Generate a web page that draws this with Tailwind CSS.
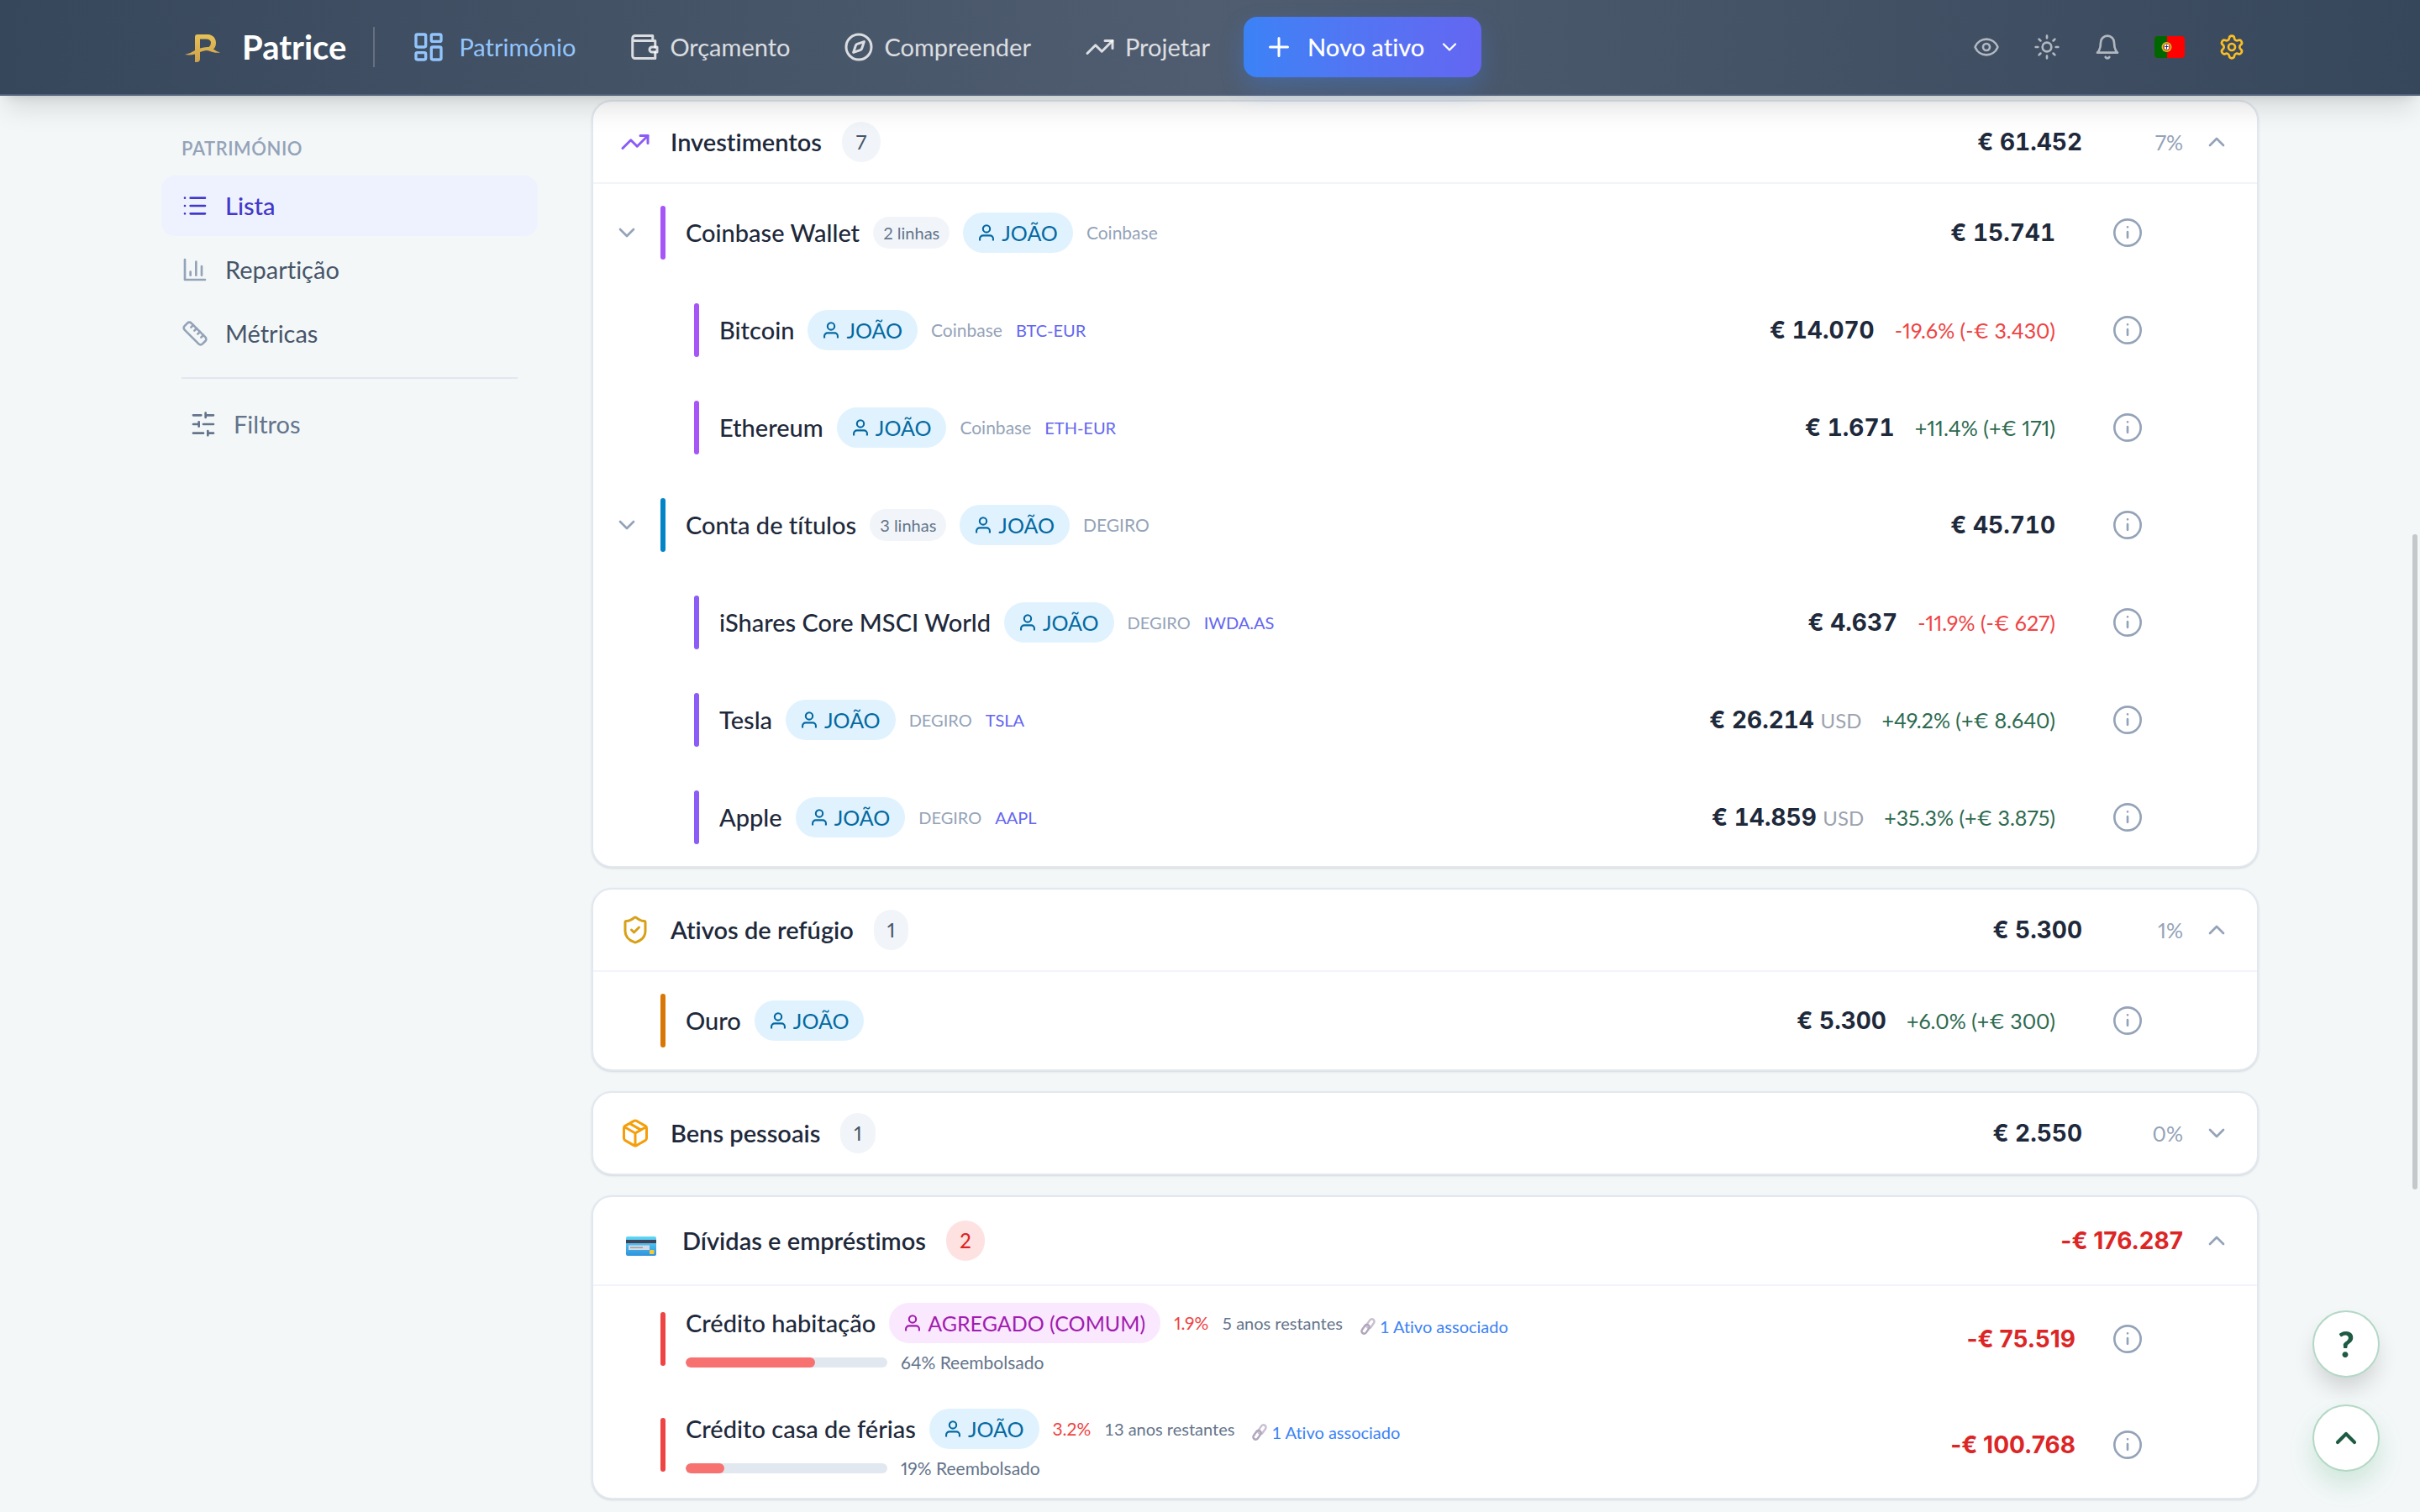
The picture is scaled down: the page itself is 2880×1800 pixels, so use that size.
<!DOCTYPE html>
<html lang="pt">
  <head>
    <meta charset="UTF-8" />
    <meta name="viewport" content="width=device-width, initial-scale=1.0" />
    <title>Patrice - Património</title>
    <script src="https://cdn.jsdelivr.net/npm/@tailwindcss/browser@4"></script>
  </head>

  <body class="min-h-screen bg-[#f3f7f8] font-[Lato,sans-serif] text-[29px] leading-10 text-[#1e293b] [font-variant-ligatures:none]">
    <!-- Icon sprite -->
    <svg class="hidden" aria-hidden="true">
      <symbol id="i-dashboard" viewBox="0 0 24 24"><rect x="3" y="3" width="7" height="9" rx="1" /><rect x="14" y="3" width="7" height="5" rx="1" /><rect x="14" y="12" width="7" height="9" rx="1" /><rect x="3" y="16" width="7" height="5" rx="1" /></symbol>
      <symbol id="i-wallet" viewBox="0 0 24 24"><path d="M18.500 7V3H4.500a2 2 0 0 0 0 4H20.500v5M2.500 5v14a2 2 0 0 0 2 2h16v-5" /><path d="M22 12h-4a2 2 0 0 0 0 4h4z" /></symbol>
      <symbol id="i-compass" viewBox="0 0 24 24"><circle cx="12" cy="12" r="10" /><path d="m16.240 7.760-1.804 5.411a2 2 0 0 1-1.265 1.265L7.760 16.240l1.804-5.411a2 2 0 0 1 1.265-1.265z" /></symbol>
      <symbol id="i-trend" viewBox="0 0 24 24"><path d="M16 7h6v6" /><path d="m22 7-8.500 8.500-5-5L2 17" /></symbol>
      <symbol id="i-plus" viewBox="0 0 24 24"><path d="M5 12h14M12 5v14" /></symbol>
      <symbol id="i-down" viewBox="0 0 24 24"><path d="m6 9 6 6 6-6" /></symbol>
      <symbol id="i-up" viewBox="0 0 24 24"><path d="m18 15-6-6-6 6" /></symbol>
      <symbol id="i-eye" viewBox="0 0 24 24"><path d="M2.062 12.348a1 1 0 0 1 0-.696 10.750 10.750 0 0 1 19.876 0 1 1 0 0 1 0 .696 10.750 10.750 0 0 1-19.876 0" /><circle cx="12" cy="12" r="3" /></symbol>
      <symbol id="i-sun" viewBox="0 0 24 24"><circle cx="12" cy="12" r="4" /><path d="M12 2v2M12 20v2M4.930 4.930l1.410 1.410M17.660 17.660l1.410 1.410M2 12h2M20 12h2M6.340 17.660l-1.410 1.410M19.070 4.930l-1.410 1.410" /></symbol>
      <symbol id="i-bell" viewBox="0 0 24 24"><path d="M6 8a6 6 0 0 1 12 0c0 7 3 9 3 9H3s3-2 3-9" /><path d="M10.300 21a1.940 1.940 0 0 0 3.400 0" /></symbol>
      <symbol id="i-gear" viewBox="0 0 24 24"><path d="M9.671 4.136a2.340 2.340 0 0 1 4.659 0 2.340 2.340 0 0 0 3.319 1.915 2.340 2.340 0 0 1 2.330 4.033 2.340 2.340 0 0 0 0 3.831 2.340 2.340 0 0 1-2.330 4.033 2.340 2.340 0 0 0-3.319 1.915 2.340 2.340 0 0 1-4.659 0 2.340 2.340 0 0 0-3.320-1.915 2.340 2.340 0 0 1-2.330-4.033 2.340 2.340 0 0 0 0-3.831A2.340 2.340 0 0 1 6.350 6.051a2.340 2.340 0 0 0 3.319-1.915" /><circle cx="12" cy="12" r="3" /></symbol>
      <symbol id="i-list" viewBox="0 0 24 24"><path d="M3 5h.01M3 12h.01M3 19h.01M8 5h13M8 12h13M8 19h13" /></symbol>
      <symbol id="i-chart" viewBox="0 0 24 24"><path d="M3 3v18h18M8 17v-3M13 17V5M18 17V9" /></symbol>
      <symbol id="i-ruler" viewBox="0 0 24 24"><path d="M21.300 15.300a2.400 2.400 0 0 1 0 3.400l-2.600 2.600a2.400 2.400 0 0 1-3.400 0L2.700 8.700a2.410 2.410 0 0 1 0-3.400l2.600-2.600a2.410 2.410 0 0 1 3.400 0Z" /><path d="m14.500 12.500 2-2M11.500 9.500l2-2M8.500 6.500l2-2M17.500 15.500l2-2" /></symbol>
      <symbol id="i-sliders" viewBox="0 0 24 24"><path d="M10 4H3M12 20H3M14 2v4M16 18v4M21 12h-9M21 20h-5M21 4h-7M8 10v4M8 12H3" /></symbol>
      <symbol id="i-user" viewBox="0 0 24 24"><circle cx="12" cy="6.500" r="5" /><path d="M2.500 23.500v-3A4.500 4.500 0 0 1 7 16h10a4.500 4.500 0 0 1 4.500 4.500v3" /></symbol>
      <symbol id="i-info" viewBox="0 0 24 24"><circle cx="12" cy="12" r="9.400" /><path d="M12 11.500v4M12 8h.01" /></symbol>
      <symbol id="i-shield" viewBox="0 0 24 24"><path d="M20 13c0 5-3.500 7.500-7.660 8.950a1 1 0 0 1-.67-.01C7.500 20.500 4 18 4 13V6a1 1 0 0 1 1-1c2 0 4.500-1.200 6.240-2.720a1.170 1.170 0 0 1 1.520 0C14.510 3.810 17 5 19 5a1 1 0 0 1 1 1z" /><path d="m9 12 2 2 4-4" /></symbol>
      <symbol id="i-box" viewBox="0 0 24 24"><path d="M11 21.730a2 2 0 0 0 2 0l7-4A2 2 0 0 0 21 16V8a2 2 0 0 0-1-1.730l-7-4a2 2 0 0 0-2 0l-7 4A2 2 0 0 0 3 8v8a2 2 0 0 0 1 1.730zM12 22V12M3.290 7 12 12l8.710-5M7.500 4.270l9 5.150" /></symbol>
      <symbol id="i-link" viewBox="0 0 24 24"><rect x="-3.500" y="-7" width="7" height="14" rx="3.500" transform="translate(15.500 8) rotate(35)" stroke="#c9c0d2" /><rect x="-3.500" y="-7" width="7" height="14" rx="3.500" transform="translate(8.500 16) rotate(35)" stroke="#b1a6bd" /></symbol>
    </svg>

    <!-- Top bar -->
    <header class="relative z-10 flex h-[114px] items-center border-b-2 border-[#52607a] bg-linear-to-r from-[#37475b] via-[#505d70] to-[#37475b] pr-[202px] pl-[212px] shadow-[0_20px_30px_-6px_rgba(0,0,0,0.12),0_8px_12px_-8px_rgba(0,0,0,0.12)]">
      <a href="#" class="flex items-center gap-6 text-[40px] font-bold text-white">
        <svg class="ml-1.5 h-9 w-[46px]" viewBox="0 0 46 36">
          <defs>
            <linearGradient id="gold" x1="0" y1="0" x2="0" y2="1">
              <stop offset="0" stop-color="#e8c158" />
              <stop offset="1" stop-color="#cfa04a" />
            </linearGradient>
          </defs>
          <path fill="url(#gold)" fill-rule="evenodd" d="M14 22V6q0-3 3-3h11c7 0 11 4 11 10 0 3-1 5.500-3 7.500q3 2.500 8 4-5 1-10-.8-3.500-1.700-6.500-1.700-3.500.3-7.500 2V32q0 4-4 4h-2v-9.500Q8 28 2 27q6.500-1.200 12-5zM20 19.500q6-2 10.500-1.500 2.500-2 2.500-5 0-4.500-6-4.500h-7z" />
        </svg>
        Patrice
      </a>
      <span class="ml-8 h-12 w-0.5 bg-white/20"></span>
      <nav class="ml-11 flex items-center gap-16 text-white/80">
        <a href="#" class="flex items-center gap-4 text-[#93c5fd]">
          <svg class="size-10 fill-none stroke-current stroke-2 [stroke-linecap:round] [stroke-linejoin:round]"><use href="#i-dashboard" /></svg>
          Património
        </a>
        <a href="#" class="flex items-center gap-3">
          <svg class="size-9 fill-none stroke-current stroke-2 [stroke-linecap:round] [stroke-linejoin:round]"><use href="#i-wallet" /></svg>
          Orçamento
        </a>
        <a href="#" class="flex items-center gap-3">
          <svg class="size-9 fill-none stroke-current stroke-2 [stroke-linecap:round] [stroke-linejoin:round]"><use href="#i-compass" /></svg>
          Compreender
        </a>
        <a href="#" class="flex items-center gap-3">
          <svg class="size-9 fill-none stroke-current stroke-2 [stroke-linecap:round] [stroke-linejoin:round]"><use href="#i-trend" /></svg>
          Projetar
        </a>
      </nav>
      <button class="ml-10 flex h-[72px] items-center gap-4 rounded-2xl bg-linear-to-r from-[#3b82f6] to-[#6366f1] px-6 font-medium text-white shadow-[0_12px_28px_rgba(59,130,246,0.3)]">
        <svg class="size-9 fill-none stroke-current stroke-2 [stroke-linecap:round]"><use href="#i-plus" /></svg>
        Novo ativo
        <svg class="size-7 fill-none stroke-current stroke-2 [stroke-linecap:round] [stroke-linejoin:round]"><use href="#i-down" /></svg>
      </button>
      <div class="ml-auto flex items-center gap-10 text-white/60">
        <button aria-label="Ocultar valores"><svg class="size-8 fill-none stroke-current stroke-2 [stroke-linecap:round] [stroke-linejoin:round]"><use href="#i-eye" /></svg></button>
        <button aria-label="Tema"><svg class="size-8 fill-none stroke-current stroke-2 [stroke-linecap:round] [stroke-linejoin:round]"><use href="#i-sun" /></svg></button>
        <button aria-label="Notificações"><svg class="size-8 fill-none stroke-current stroke-2 [stroke-linecap:round] [stroke-linejoin:round]"><use href="#i-bell" /></svg></button>
        <button aria-label="Idioma">
          <svg class="h-[26px] w-9 rounded-sm" viewBox="0 0 36 26">
            <path fill="#f00" d="M0 0h36v26H0z" />
            <path fill="#060" d="M0 0h15v26H0z" />
            <circle cx="14.500" cy="13" r="6" fill="#c8c81e" />
            <circle cx="14.500" cy="13" r="4.500" fill="#e0542a" />
            <path fill="#fff" d="M12 10h5v4.500q-2.500 3-5 0z" />
            <path stroke="#003399" d="M14.500 10.500v5M12.500 12.500h4" />
          </svg>
        </button>
        <button aria-label="Definições" class="pr-1.5 text-[#fbbf24]"><svg class="size-8 fill-none stroke-current stroke-2 [stroke-linecap:round] [stroke-linejoin:round]"><use href="#i-gear" /></svg></button>
      </div>
    </header>

    <div class="flex gap-16 px-48 pt-[5px]">
      <!-- Sidebar -->
      <aside class="w-[448px] shrink-0 pt-[42px] text-[#475569]">
        <h2 class="mb-4 px-6 text-[22px] leading-8 font-semibold tracking-wide text-[#94a3b8]">PATRIMÓNIO</h2>
        <nav class="flex flex-col gap-1">
          <a href="#" class="flex h-[72px] items-center gap-5 rounded-2xl bg-[#eef2ff] px-6 font-medium text-[#4338ca]">
            <svg class="size-8 fill-none stroke-current stroke-2 [stroke-linecap:round]"><use href="#i-list" /></svg>
            Lista
          </a>
          <a href="#" class="flex h-[72px] items-center gap-5 px-6">
            <svg class="size-8 fill-none stroke-[#94a3b8] stroke-2 [stroke-linecap:round] [stroke-linejoin:round]"><use href="#i-chart" /></svg>
            Repartição
          </a>
          <a href="#" class="flex h-[72px] items-center gap-5 px-6">
            <svg class="size-8 fill-none stroke-[#94a3b8] stroke-2 [stroke-linecap:round] [stroke-linejoin:round]"><use href="#i-ruler" /></svg>
            Métricas
          </a>
        </nav>
        <hr class="mx-6 mt-4 mb-[18px] border-t-2 border-[#e2e8f0]" />
        <button class="flex h-[72px] items-center gap-5 px-[34px] text-[#64748b]">
          <svg class="size-8 fill-none stroke-current stroke-2 [stroke-linecap:round]"><use href="#i-sliders" /></svg>
          Filtros
        </button>
      </aside>

      <!-- Asset groups -->
      <main class="flex min-w-0 flex-1 flex-col gap-6">
        <section class="rounded-3xl border-2 border-[#e2e8f0] bg-white shadow-sm">
          <button class="flex h-[98px] w-full items-center gap-6 border-b-2 border-[#f1f5f9] px-8 text-left">
            <svg class="size-9 fill-none stroke-[#8b5cf6] stroke-2 [stroke-linecap:round] [stroke-linejoin:round]"><use href="#i-trend" /></svg>
            <span class="font-semibold">Investimentos</span>
            <span class="rounded-full bg-[#f1f5f9] px-4 text-2xl leading-[48px] text-[#475569]">7</span>
            <span class="ml-auto font-[Inter] text-[28px] font-bold tabular-nums">€ 61.452</span>
            <span class="w-24 text-right text-[25px] text-[#94a3b8] proportional-nums">7%</span>
            <svg class="size-8 fill-none stroke-[#94a3b8] stroke-2 [stroke-linecap:round] [stroke-linejoin:round]"><use href="#i-up" /></svg>
          </button>
          <ul>
            <li class="flex h-[116px] items-center gap-4 pr-[134px] pl-6">
              <button class="mr-6" aria-label="Recolher"><svg class="size-8 fill-none stroke-[#94a3b8] stroke-2 [stroke-linecap:round] [stroke-linejoin:round]"><use href="#i-down" /></svg></button>
              <span class="-ml-4 h-16 w-1.5 rounded-full bg-[#a855f7]"></span>
              <span class="ml-2 font-medium">Coinbase Wallet</span>
              <span class="rounded-full bg-[#f1f5f9] px-3 text-xl leading-[38px] text-[#64748b]">2 linhas</span>
              <span class="flex h-12 items-center gap-2 rounded-full bg-[#e0f2fe] px-[18px] text-[25px] text-[#0369a1]"><svg class="size-5 fill-none stroke-current stroke-[2.5]"><use href="#i-user" /></svg>JOÃO</span>
              <span class="text-[21px] text-[#94a3b8]">Coinbase</span>
              <span class="ml-auto font-[Inter] text-[28px] font-bold tabular-nums">€ 15.741</span>
              <button class="ml-[50px]" aria-label="Detalhes"><svg class="size-10 fill-none stroke-[#94a3b8] stroke-[1.6] [stroke-linecap:round]"><use href="#i-info" /></svg></button>
            </li>
            <li class="flex h-[116px] items-center gap-4 pr-[134px] pl-30">
              <span class="h-16 w-1.5 rounded-full bg-[#a855f7]"></span>
              <span class="ml-2 font-medium">Bitcoin</span>
              <span class="flex h-12 items-center gap-2 rounded-full bg-[#e0f2fe] px-[18px] text-[25px] text-[#0369a1]"><svg class="size-5 fill-none stroke-current stroke-[2.5]"><use href="#i-user" /></svg>JOÃO</span>
              <span class="text-[21px] text-[#94a3b8]">Coinbase</span>
              <span class="text-xl text-[#6366f1]">BTC-EUR</span>
              <span class="ml-auto font-[Inter] text-[28px] font-bold tabular-nums">€ 14.070</span>
              <span class="ml-2 text-[25px] text-[#ef4444] proportional-nums">-19.6% (-€ 3.430)</span>
              <button class="ml-[50px]" aria-label="Detalhes"><svg class="size-10 fill-none stroke-[#94a3b8] stroke-[1.6] [stroke-linecap:round]"><use href="#i-info" /></svg></button>
            </li>
            <li class="flex h-[116px] items-center gap-4 pr-[134px] pl-30">
              <span class="h-16 w-1.5 rounded-full bg-[#a855f7]"></span>
              <span class="ml-2 font-medium">Ethereum</span>
              <span class="flex h-12 items-center gap-2 rounded-full bg-[#e0f2fe] px-[18px] text-[25px] text-[#0369a1]"><svg class="size-5 fill-none stroke-current stroke-[2.5]"><use href="#i-user" /></svg>JOÃO</span>
              <span class="text-[21px] text-[#94a3b8]">Coinbase</span>
              <span class="text-xl text-[#6366f1]">ETH-EUR</span>
              <span class="ml-auto font-[Inter] text-[28px] font-bold tabular-nums">€ 1.671</span>
              <span class="ml-2 text-[25px] text-[#2d6a4f] proportional-nums">+11.4% (+€ 171)</span>
              <button class="ml-[50px]" aria-label="Detalhes"><svg class="size-10 fill-none stroke-[#94a3b8] stroke-[1.6] [stroke-linecap:round]"><use href="#i-info" /></svg></button>
            </li>
            <li class="flex h-[116px] items-center gap-4 pr-[134px] pl-6">
              <button class="mr-6" aria-label="Recolher"><svg class="size-8 fill-none stroke-[#94a3b8] stroke-2 [stroke-linecap:round] [stroke-linejoin:round]"><use href="#i-down" /></svg></button>
              <span class="-ml-4 h-16 w-1.5 rounded-full bg-[#0284c7]"></span>
              <span class="ml-2 font-medium">Conta de títulos</span>
              <span class="rounded-full bg-[#f1f5f9] px-3 text-xl leading-[38px] text-[#64748b]">3 linhas</span>
              <span class="flex h-12 items-center gap-2 rounded-full bg-[#e0f2fe] px-[18px] text-[25px] text-[#0369a1]"><svg class="size-5 fill-none stroke-current stroke-[2.5]"><use href="#i-user" /></svg>JOÃO</span>
              <span class="text-[21px] text-[#94a3b8]">DEGIRO</span>
              <span class="ml-auto font-[Inter] text-[28px] font-bold tabular-nums">€ 45.710</span>
              <button class="ml-[50px]" aria-label="Detalhes"><svg class="size-10 fill-none stroke-[#94a3b8] stroke-[1.6] [stroke-linecap:round]"><use href="#i-info" /></svg></button>
            </li>
            <li class="flex h-[116px] items-center gap-4 pr-[134px] pl-30">
              <span class="h-16 w-1.5 rounded-full bg-[#8b5cf6]"></span>
              <span class="ml-2 font-medium">iShares Core MSCI World</span>
              <span class="flex h-12 items-center gap-2 rounded-full bg-[#e0f2fe] px-[18px] text-[25px] text-[#0369a1]"><svg class="size-5 fill-none stroke-current stroke-[2.5]"><use href="#i-user" /></svg>JOÃO</span>
              <span class="text-xl text-[#94a3b8]">DEGIRO</span>
              <span class="text-xl text-[#6366f1]">IWDA.AS</span>
              <span class="ml-auto font-[Inter] text-[28px] font-bold tabular-nums">€ 4.637</span>
              <span class="ml-2 text-[25px] text-[#ef4444] proportional-nums">-11.9% (-€ 627)</span>
              <button class="ml-[50px]" aria-label="Detalhes"><svg class="size-10 fill-none stroke-[#94a3b8] stroke-[1.6] [stroke-linecap:round]"><use href="#i-info" /></svg></button>
            </li>
            <li class="flex h-[116px] items-center gap-4 pr-[134px] pl-30">
              <span class="h-16 w-1.5 rounded-full bg-[#8b5cf6]"></span>
              <span class="ml-2 font-medium">Tesla</span>
              <span class="flex h-12 items-center gap-2 rounded-full bg-[#e0f2fe] px-[18px] text-[25px] text-[#0369a1]"><svg class="size-5 fill-none stroke-current stroke-[2.5]"><use href="#i-user" /></svg>JOÃO</span>
              <span class="text-xl text-[#94a3b8]">DEGIRO</span>
              <span class="text-xl text-[#6366f1]">TSLA</span>
              <span class="ml-auto font-[Inter] text-[28px] font-bold tabular-nums">€ 26.214 <span class="font-[Lato] text-2xl font-normal text-[#9ca3af]">USD</span></span>
              <span class="ml-2 text-[25px] text-[#2d6a4f] proportional-nums">+49.2% (+€ 8.640)</span>
              <button class="ml-[50px]" aria-label="Detalhes"><svg class="size-10 fill-none stroke-[#94a3b8] stroke-[1.6] [stroke-linecap:round]"><use href="#i-info" /></svg></button>
            </li>
            <li class="flex h-[116px] items-center gap-4 pr-[134px] pl-30">
              <span class="h-16 w-1.5 rounded-full bg-[#8b5cf6]"></span>
              <span class="ml-2 font-medium">Apple</span>
              <span class="flex h-12 items-center gap-2 rounded-full bg-[#e0f2fe] px-[18px] text-[25px] text-[#0369a1]"><svg class="size-5 fill-none stroke-current stroke-[2.5]"><use href="#i-user" /></svg>JOÃO</span>
              <span class="text-xl text-[#94a3b8]">DEGIRO</span>
              <span class="text-xl text-[#6366f1]">AAPL</span>
              <span class="ml-auto font-[Inter] text-[28px] font-bold tabular-nums">€ 14.859 <span class="font-[Lato] text-2xl font-normal text-[#9ca3af]">USD</span></span>
              <span class="ml-2 text-[25px] text-[#2d6a4f] proportional-nums">+35.3% (+€ 3.875)</span>
              <button class="ml-[50px]" aria-label="Detalhes"><svg class="size-10 fill-none stroke-[#94a3b8] stroke-[1.6] [stroke-linecap:round]"><use href="#i-info" /></svg></button>
            </li>
          </ul>
        </section>

        <section class="rounded-3xl border-2 border-[#e2e8f0] bg-white shadow-sm">
          <button class="flex h-[98px] w-full items-center gap-6 border-b-2 border-[#f1f5f9] px-8 text-left">
            <svg class="size-9 fill-none stroke-[#d9a016] stroke-2 [stroke-linecap:round] [stroke-linejoin:round]"><use href="#i-shield" /></svg>
            <span class="font-semibold">Ativos de refúgio</span>
            <span class="rounded-full bg-[#f1f5f9] px-4 text-2xl leading-[48px] text-[#475569] proportional-nums">1</span>
            <span class="ml-auto font-[Inter] text-[28px] font-bold tabular-nums">€ 5.300</span>
            <span class="w-24 text-right text-[25px] text-[#94a3b8] proportional-nums">1%</span>
            <svg class="size-8 fill-none stroke-[#94a3b8] stroke-2 [stroke-linecap:round] [stroke-linejoin:round]"><use href="#i-up" /></svg>
          </button>
          <ul>
            <li class="flex h-[116px] items-center gap-4 pr-[134px] pl-20">
              <span class="h-16 w-1.5 rounded-full bg-[#d97706]"></span>
              <span class="ml-2 font-medium">Ouro</span>
              <span class="flex h-12 items-center gap-2 rounded-full bg-[#e0f2fe] px-[18px] text-[25px] text-[#0369a1]"><svg class="size-5 fill-none stroke-current stroke-[2.5]"><use href="#i-user" /></svg>JOÃO</span>
              <span class="ml-auto font-[Inter] text-[28px] font-bold tabular-nums">€ 5.300</span>
              <span class="ml-2 text-[25px] text-[#2d6a4f] proportional-nums">+6.0% (+€ 300)</span>
              <button class="ml-[50px]" aria-label="Detalhes"><svg class="size-10 fill-none stroke-[#94a3b8] stroke-[1.6] [stroke-linecap:round]"><use href="#i-info" /></svg></button>
            </li>
          </ul>
        </section>

        <section class="rounded-3xl border-2 border-[#e2e8f0] bg-white shadow-sm">
          <button class="flex h-24 w-full items-center gap-6 px-8 text-left">
            <svg class="size-9 fill-none stroke-[#f59e0b] stroke-2 [stroke-linecap:round] [stroke-linejoin:round]"><use href="#i-box" /></svg>
            <span class="font-semibold">Bens pessoais</span>
            <span class="rounded-full bg-[#f1f5f9] px-4 text-2xl leading-[48px] text-[#475569] proportional-nums">1</span>
            <span class="ml-auto font-[Inter] text-[28px] font-bold tabular-nums">€ 2.550</span>
            <span class="w-24 text-right text-[25px] text-[#94a3b8] proportional-nums">0%</span>
            <svg class="size-8 fill-none stroke-[#94a3b8] stroke-2 [stroke-linecap:round] [stroke-linejoin:round]"><use href="#i-down" /></svg>
          </button>
        </section>

        <section class="rounded-3xl border-2 border-[#e2e8f0] bg-white shadow-sm">
          <button class="flex h-[106px] w-full items-center gap-6 border-b-2 border-[#f1f5f9] px-8 text-left">
            <svg class="h-9 w-[50px]" viewBox="0 0 50 36">
              <defs>
                <linearGradient id="card" x1="0" y1="0" x2="0" y2="1">
                  <stop offset="0" stop-color="#5fd8f5" />
                  <stop offset="1" stop-color="#2f93dd" />
                </linearGradient>
              </defs>
              <rect x="7" y="13" width="36" height="23" rx="2" fill="url(#card)" />
              <path fill="#43405a" d="M7 17h36v4H7z" />
              <rect x="10" y="23.500" width="25" height="5.500" fill="#d3dbe6" />
              <path fill="#9aa0ac" d="M12 25.500h15v1.500H12z" />
              <rect x="35" y="29" width="5.500" height="5" rx="1" fill="#f5c93b" />
            </svg>
            <span class="font-semibold">Dívidas e empréstimos</span>
            <span class="rounded-full bg-[#fee2e2] px-4 text-2xl leading-[48px] font-medium text-[#dc2626]">2</span>
            <span class="ml-auto font-[Inter] text-[28px] font-bold text-[#dc2626]">-€ 176.287</span>
            <svg class="size-8 fill-none stroke-[#94a3b8] stroke-2 [stroke-linecap:round] [stroke-linejoin:round]"><use href="#i-up" /></svg>
          </button>
          <ul>
            <li class="flex h-[126px] items-center pr-[134px] pl-20">
              <span class="h-16 w-1.5 rounded-full bg-[#ef4444]"></span>
              <div class="ml-6 flex flex-col gap-2">
                <div class="flex items-center gap-4">
                  <span class="font-medium">Crédito habitação</span>
                  <span class="flex h-12 items-center gap-2 rounded-full bg-[#fae8ff] px-[18px] text-[25px] text-[#a21caf]"><svg class="size-5 fill-none stroke-current stroke-[2.5]"><use href="#i-user" /></svg>AGREGADO (COMUM)</span>
                  <span class="text-[21px] text-[#ef4444] proportional-nums">1.9%</span>
                  <span class="text-xl text-[#64748b]">5 anos restantes</span>
                  <a href="#" class="flex items-center gap-1 pt-2 pl-1 text-xl text-[#3b82f6]"><svg class="size-5 fill-none stroke-3"><use href="#i-link" /></svg>1 Ativo associado</a>
                </div>
                <div class="flex items-center gap-4">
                  <div class="h-3 w-60 overflow-hidden rounded-full bg-[#e2e8f0]"><div class="h-full rounded-full bg-[#f87171]" style="width: 64%"></div></div>
                  <span class="text-[21px] leading-[30px] text-[#64748b] proportional-nums">64% Reembolsado</span>
                </div>
              </div>
              <span class="ml-auto font-[Inter] text-[28px] font-bold text-[#dc2626]">-€ 75.519</span>
              <button class="ml-[42px]" aria-label="Detalhes"><svg class="size-10 fill-none stroke-[#94a3b8] stroke-[1.6] [stroke-linecap:round]"><use href="#i-info" /></svg></button>
            </li>
            <li class="flex h-[126px] items-center pr-[134px] pl-20">
              <span class="h-16 w-1.5 rounded-full bg-[#ef4444]"></span>
              <div class="ml-6 flex flex-col gap-2">
                <div class="flex items-center gap-4">
                  <span class="font-medium">Crédito casa de férias</span>
                  <span class="flex h-12 items-center gap-2 rounded-full bg-[#e0f2fe] px-[18px] text-[25px] text-[#0369a1]"><svg class="size-5 fill-none stroke-current stroke-[2.5]"><use href="#i-user" /></svg>JOÃO</span>
                  <span class="text-[21px] text-[#ef4444] proportional-nums">3.2%</span>
                  <span class="text-xl text-[#64748b]">13 anos restantes</span>
                  <a href="#" class="flex items-center gap-1 pt-2 pl-1 text-xl text-[#3b82f6]"><svg class="size-5 fill-none stroke-3"><use href="#i-link" /></svg>1 Ativo associado</a>
                </div>
                <div class="flex items-center gap-4">
                  <div class="h-3 w-60 overflow-hidden rounded-full bg-[#e2e8f0]"><div class="h-full rounded-full bg-[#f87171]" style="width: 19%"></div></div>
                  <span class="text-[21px] leading-[30px] text-[#64748b] proportional-nums">19% Reembolsado</span>
                </div>
              </div>
              <span class="ml-auto font-[Inter] text-[28px] font-bold text-[#dc2626]">-€ 100.768</span>
              <button class="ml-[42px]" aria-label="Detalhes"><svg class="size-10 fill-none stroke-[#94a3b8] stroke-[1.6] [stroke-linecap:round]"><use href="#i-info" /></svg></button>
            </li>
          </ul>
        </section>
      </main>
    </div>

    <!-- Floating actions -->
    <div class="fixed right-12 bottom-12 flex flex-col gap-8">
      <button class="size-20 rounded-full border-2 border-[#b3d8c5] bg-white text-[42px] font-black text-[#1f5a43] shadow-[0_16px_28px_-4px_rgba(0,0,0,0.16)]">?</button>
      <button aria-label="Voltar ao topo" class="flex size-20 items-center justify-center rounded-full border-2 border-[#b3d8c5] bg-white text-[#1f5a43] shadow-[0_16px_30px_rgba(45,160,90,0.18)]">
        <svg class="size-10 fill-none stroke-current stroke-[2.5] [stroke-linecap:round] [stroke-linejoin:round]"><use href="#i-up" /></svg>
      </button>
    </div>

    <!-- Scroll indicator -->
    <div class="fixed top-[636px] right-[3px] h-[780px] w-1.5 rounded-full bg-[#c5c8ca]"></div>
  </body>
</html>
